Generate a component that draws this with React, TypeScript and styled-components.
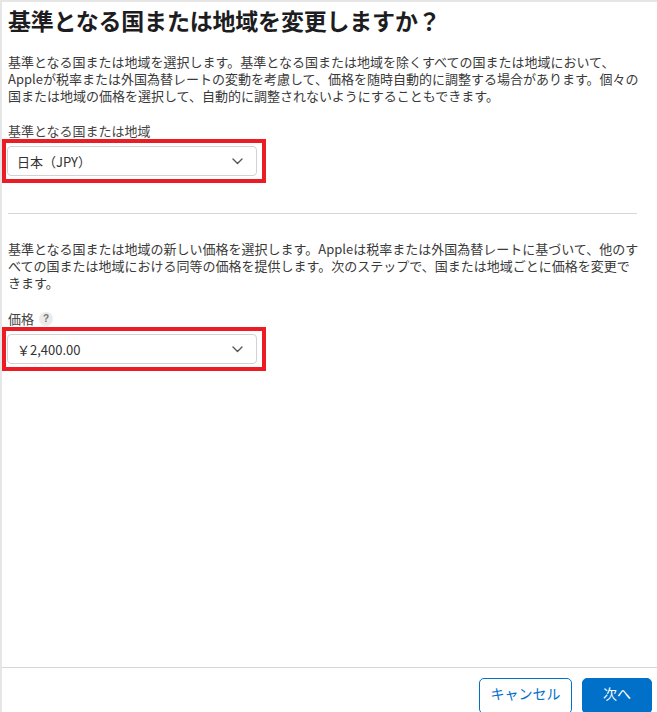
import React from "react";
import styled, { createGlobalStyle } from "styled-components";

const Global = createGlobalStyle`
  html, body { margin: 0; padding: 0; background: #e6e6e6; }
  body { font-family: "Noto Sans CJK JP", "Noto Sans", sans-serif; }
`;

const Page = styled.div`
  padding: 2px 0 0 2px;
  background: #e6e6e6;
  height: 712px;
  box-sizing: border-box;
  overflow: hidden;
`;

const Panel = styled.div`
  background: #fff;
  height: 710px;
  display: flex;
  flex-direction: column;
`;

const Body = styled.div`
  flex: 1;
  padding: 2px 12px 0 6px;
  display: flex;
  flex-direction: column;
`;

const Title = styled.h1`
  margin: 0;
  font-size: 23px;
  line-height: 32px;
  font-weight: 700;
  color: #1d1d1f;
  letter-spacing: -0.2px;
`;

const Text = styled.p<{ $top: number }>`
  margin: ${(p) => p.$top}px 0 0;
  font-size: 13px;
  line-height: 17px;
  color: #3a3a3a;
  white-space: nowrap;
`;

const Label = styled.div<{ $top: number }>`
  margin-top: ${(p) => p.$top}px;
  font-size: 13px;
  line-height: 17px;
  color: #444;
  display: flex;
  align-items: center;
  gap: 5px;
`;

const Help = styled.span`
  width: 14px;
  height: 14px;
  border-radius: 50%;
  background: #ebebeb;
  color: #777;
  font-size: 10px;
  font-weight: 700;
  line-height: 14px;
  text-align: center;
  font-family: "Liberation Sans", sans-serif;
`;

const SelectWrap = styled.div<{ $top: number }>`
  position: relative;
  margin-top: ${(p) => p.$top}px;
  margin-left: -1px;
  width: 250px;
  &::after {
    content: "";
    position: absolute;
    left: -5px;
    right: -9px;
    top: -7px;
    bottom: -7px;
    border: 4px solid #ec1c24;
    pointer-events: none;
  }
`;

const Select = styled.div`
  height: 30px;
  box-sizing: border-box;
  border: 1px solid #d2d2d2;
  border-radius: 4px;
  display: flex;
  align-items: center;
  justify-content: space-between;
  padding: 0 13px 0 9px;
  font-size: 13px;
  color: #333;
`;

const Divider = styled.div<{ $top: number }>`
  margin-top: ${(p) => p.$top}px;
  margin-right: 8px;
  height: 1px;
  background: #d6d6d6;
`;

const Footer = styled.div`
  border-top: 1px solid #d6d6d6;
  display: flex;
  justify-content: flex-end;
  gap: 10px;
  padding: 10px 5px 0 0;
  height: 45px;
  box-sizing: border-box;
`;

const Button = styled.button<{ $primary?: boolean }>`
  height: 36px;
  box-sizing: border-box;
  padding: 0 10px 6px;
  border-radius: 5px;
  font-family: inherit;
  font-size: 14px;
  line-height: 20px;
  border: 1px solid #0070c9;
  background: ${(p) => (p.$primary ? "#0070c9" : "#fff")};
  color: ${(p) => (p.$primary ? "#fff" : "#0070c9")};
  min-width: ${(p) => (p.$primary ? "70px" : "93px")};
`;

const Chevron = () => (
  <svg width="11" height="7" viewBox="0 0 11 7" fill="none">
    <path d="M1 1l4.5 4.5L10 1" stroke="#555" strokeWidth="1.4" strokeLinecap="round" strokeLinejoin="round" />
  </svg>
);

export default function App() {
  return (
    <>
      <Global />
      <Page>
        <Panel>
          <Body>
            <Title>基準となる国または地域を変更しますか？</Title>
            <Text $top={17}>
              基準となる国または地域を選択します。基準となる国または地域を除くすべての国または地域において、
              <br />
              Appleが税率または外国為替レートの変動を考慮して、価格を随時自動的に調整する場合があります。個々の
              <br />
              国または地域の価格を選択して、自動的に調整されないようにすることもできます。
            </Text>
            <Label $top={18}>基準となる国または地域</Label>
            <SelectWrap $top={7}>
              <Select>
                <span>日本（JPY）</span>
                <Chevron />
              </Select>
            </SelectWrap>
            <Divider $top={37} />
            <Text $top={26}>
              基準となる国または地域の新しい価格を選択します。Appleは税率または外国為替レートに基づいて、他のす
              <br />
              べての国または地域における同等の価格を提供します。次のステップで、国または地域ごとに価格を変更で
              <br />
              きます。
            </Text>
            <Label $top={19}>
              価格<Help>?</Help>
            </Label>
            <SelectWrap $top={7}>
              <Select>
                <span>￥2,400.00</span>
                <Chevron />
              </Select>
            </SelectWrap>
          </Body>
          <Footer>
            <Button>キャンセル</Button>
            <Button $primary>次へ</Button>
          </Footer>
        </Panel>
      </Page>
    </>
  );
}
